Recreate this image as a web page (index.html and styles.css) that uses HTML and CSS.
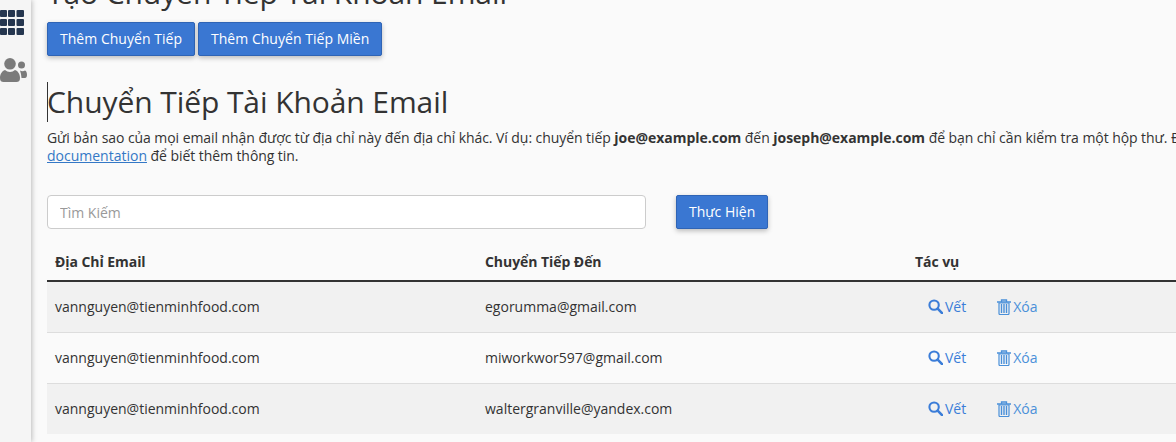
FILE: index.html
```html
<!DOCTYPE html>
<html lang="vi">
<head>
<meta charset="utf-8">
<title>Chuyển Tiếp Tài Khoản Email</title>
<link rel="stylesheet" href="styles.css">
</head>
<body>
<div class="shell">
  <aside class="rail">
    <svg class="ico-grid" viewBox="0 0 24 26" width="24" height="26" aria-hidden="true">
      <g fill="#25364f">
        <rect x="0" y="0" width="7" height="7" rx="1"/><rect x="8" y="0" width="7" height="7" rx="1"/><rect x="16.500" y="0" width="7.500" height="7" rx="1"/>
        <rect x="0" y="9" width="7" height="7" rx="1"/><rect x="8" y="9" width="7" height="7" rx="1"/><rect x="16.500" y="9" width="7.500" height="7" rx="1"/>
        <rect x="0" y="18" width="7" height="7" rx="1"/><rect x="8" y="18" width="7" height="7" rx="1"/><rect x="16.500" y="18" width="7.500" height="7" rx="1"/>
      </g>
    </svg>
    <svg class="ico-users" viewBox="0 0 28 26" width="28" height="26" aria-hidden="true">
      <g fill="#7b7b7b">
        <circle cx="11" cy="6.800" r="5.800"/>
        <circle cx="22.500" cy="8" r="3.500"/>
        <path d="M1 21c0-4 2-7 5-8 1.500 1.200 3 2 5 2s3.500-.8 5-2c3 1 5 4 5 8 0 3-1.500 4-3.500 4H4.500C2.500 25 1 24 1 21z"/>
        <path d="M21 13.500c.8.500 1.600.8 2.500.8s1.800-.3 2.500-.8c1.300.5 2 2.300 2 4.500 0 1.800-1 3-2 3h-3.500c-.2-2.800-.7-5.200-1.500-7.500z"/>
      </g>
    </svg>
  </aside>
  <main class="content">
    <h1 class="title title-cut">Tạo Chuyển Tiếp Tài Khoản Email</h1>
    <div class="btn-row">
      <button class="btn" type="button">Thêm Chuyển Tiếp</button>
      <button class="btn" type="button">Thêm Chuyển Tiếp Miền</button>
    </div>
    <h2 class="title title-main">Chuyển Tiếp Tài Khoản Email</h2>
    <p class="intro">Gửi bản sao của mọi email nhận được từ địa chỉ này đến địa chỉ khác. Ví dụ: chuyển tiếp <strong>joe@example.com</strong> đến <strong>joseph@example.com</strong> để bạn chỉ cần kiểm tra một hộp thư. Đọc<br><a href="#">documentation</a> để biết thêm thông tin.</p>
    <form class="search">
      <input class="search-input" type="text" placeholder="Tìm Kiếm">
      <button class="btn" type="button">Thực Hiện</button>
    </form>
    <table class="grid">
      <thead>
        <tr><th>Địa Chỉ Email</th><th>Chuyển Tiếp Đến</th><th>Tác vụ</th></tr>
      </thead>
      <tbody>
        <tr>
          <td>vannguyen@tienminhfood.com</td><td>egorumma@gmail.com</td>
          <td><div class="actions">
            <a class="act" href="#"><svg class="ico" viewBox="0 0 16 16" width="15" height="15" aria-hidden="true"><circle cx="6.500" cy="6.500" r="5" fill="none" stroke="currentColor" stroke-width="2.200"/><path d="M10.300 10.300L15 15" stroke="currentColor" stroke-width="2.800" stroke-linecap="round"/></svg>Vết</a>
            <a class="act act-del" href="#"><svg class="ico" viewBox="0 0 14 16" width="14" height="16" aria-hidden="true"><path d="M4.500 2.500V1h5v1.500M0 3h14" fill="none" stroke="currentColor" stroke-width="1.300"/><path d="M2 4v10.500c0 .5.500 1 1 1h8c.5 0 1-.5 1-1V4z" fill="none" stroke="currentColor" stroke-width="1.200"/><path d="M4.500 5v9M7 5v9M9.500 5v9" stroke="currentColor" stroke-width="1.400"/></svg>Xóa</a>
          </div></td>
        </tr>
        <tr>
          <td>vannguyen@tienminhfood.com</td><td>miworkwor597@gmail.com</td>
          <td><div class="actions">
            <a class="act" href="#"><svg class="ico" viewBox="0 0 16 16" width="15" height="15" aria-hidden="true"><circle cx="6.500" cy="6.500" r="5" fill="none" stroke="currentColor" stroke-width="2.200"/><path d="M10.300 10.300L15 15" stroke="currentColor" stroke-width="2.800" stroke-linecap="round"/></svg>Vết</a>
            <a class="act act-del" href="#"><svg class="ico" viewBox="0 0 14 16" width="14" height="16" aria-hidden="true"><path d="M4.500 2.500V1h5v1.500M0 3h14" fill="none" stroke="currentColor" stroke-width="1.300"/><path d="M2 4v10.500c0 .5.500 1 1 1h8c.5 0 1-.5 1-1V4z" fill="none" stroke="currentColor" stroke-width="1.200"/><path d="M4.500 5v9M7 5v9M9.500 5v9" stroke="currentColor" stroke-width="1.400"/></svg>Xóa</a>
          </div></td>
        </tr>
        <tr>
          <td>vannguyen@tienminhfood.com</td><td>waltergranville@yandex.com</td>
          <td><div class="actions">
            <a class="act" href="#"><svg class="ico" viewBox="0 0 16 16" width="15" height="15" aria-hidden="true"><circle cx="6.500" cy="6.500" r="5" fill="none" stroke="currentColor" stroke-width="2.200"/><path d="M10.300 10.300L15 15" stroke="currentColor" stroke-width="2.800" stroke-linecap="round"/></svg>Vết</a>
            <a class="act act-del" href="#"><svg class="ico" viewBox="0 0 14 16" width="14" height="16" aria-hidden="true"><path d="M4.500 2.500V1h5v1.500M0 3h14" fill="none" stroke="currentColor" stroke-width="1.300"/><path d="M2 4v10.500c0 .5.500 1 1 1h8c.5 0 1-.5 1-1V4z" fill="none" stroke="currentColor" stroke-width="1.200"/><path d="M4.500 5v9M7 5v9M9.500 5v9" stroke="currentColor" stroke-width="1.400"/></svg>Xóa</a>
          </div></td>
        </tr>
      </tbody>
    </table>
  </main>
</div>
</body>
</html>
```
FILE: styles.css
```css
html, body {
  margin: 0;
  height: 442px;
  overflow: hidden;
}
body {
  background: #fafafa;
  color: #333;
  font-family: "Open Sans", sans-serif;
  font-size: 14px;
  line-height: 18px;
}
.shell {
  display: flex;
  height: 442px;
  overflow: hidden;
}
.rail {
  flex: 0 0 31px;
  background: #f5f5f5;
  box-shadow: 1px 0 5px rgba(0, 0, 0, .25);
  display: flex;
  flex-direction: column;
  align-items: flex-end;
  padding-top: 10px;
  box-sizing: border-box;
  gap: 21px;
  overflow: hidden;
}
.ico-grid { margin-right: 7px; flex: none; }
.ico-users { margin-right: 4px; flex: none; }
.content {
  flex: 0 0 1290px;
  padding-left: 16px;
  box-sizing: border-box;
}
.title {
  font-weight: 400;
  font-size: 30px;
  line-height: 40px;
  margin: 0;
  color: #333;
  letter-spacing: -.08px;
}
.title-cut {
  margin-top: -27px;
  white-space: nowrap;
}
.btn-row {
  display: flex;
  gap: 3px;
  margin-top: 9px;
}
.btn {
  font: 14px/20px "Open Sans", sans-serif;
  color: #fff;
  background: #3a77d2;
  border: 1px solid #2f64b5;
  border-radius: 2px;
  padding: 6px 12px;
  height: 34px;
  box-shadow: 0 2px 5px rgba(0, 0, 0, .25);
}
.btn-row .btn { letter-spacing: .03px; }
.title-main {
  margin-top: 26px;
  box-shadow: inset 1px 0 0 #333;
}
.intro {
  margin: 7px 0 0;
  width: 1290px;
  white-space: nowrap;
  letter-spacing: -.065px;
}
.intro strong { letter-spacing: -.03px; }
.intro a { color: #3478c6; letter-spacing: 0; }
.search {
  display: flex;
  gap: 30px;
  margin-top: 30px;
}
.search-input {
  width: 599px;
  height: 34px;
  box-sizing: border-box;
  border: 1px solid #ccc;
  border-radius: 4px;
  background: #fff;
  padding: 6px 12px;
  font: 14px/20px "Open Sans", sans-serif;
  color: #555;
}
.search-input::placeholder { color: #999; opacity: 1; }
.grid {
  border-collapse: collapse;
  table-layout: fixed;
  width: 1290px;
  margin-top: 16px;
}
.grid th:nth-child(-n+3), .grid td:nth-child(-n+3) { width: 430px; }
.grid th {
  text-align: left;
  font-weight: 700;
  padding: 8px 8px 9px;
  height: 36px;
  box-sizing: border-box;
  border-bottom: 2px solid #333;
  vertical-align: bottom;
  line-height: 18px;
  letter-spacing: -.06px;
}
.grid td {
  padding: 8px;
  height: 51px;
  box-sizing: border-box;
  border-bottom: 1px solid #ddd;
  vertical-align: middle;
}
.grid tbody tr:nth-child(odd) { background: #f1f1f1; }
.grid tbody tr:last-child td { border-bottom: 0; height: 51px; }
.actions {
  display: flex;
  gap: 31px;
  padding-left: 13px;
}
.act {
  display: inline-flex;
  align-items: center;
  gap: 2px;
  color: #3b7dd8;
  text-decoration: none;
}
.act-del { color: #4a90d9; }
.ico { flex: none; }
```
